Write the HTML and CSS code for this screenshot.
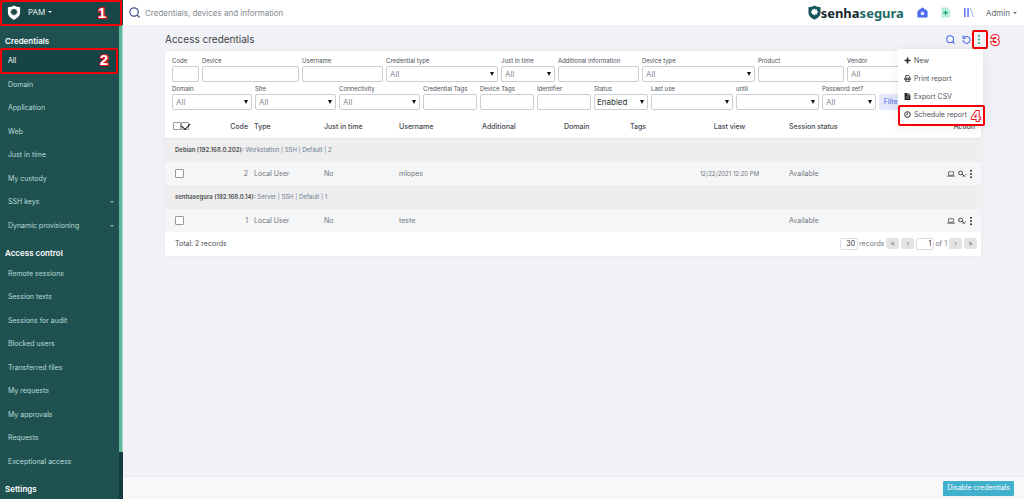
FILE: index.html
```html
<!DOCTYPE html>
<html lang="en">
<head>
<meta charset="utf-8">
<title>Access credentials</title>
<link rel="stylesheet" href="styles.css">
</head>
<body>
<svg class="sprite" aria-hidden="true">
  <symbol id="i-search" viewBox="0 0 12 12"><circle cx="5.5" cy="5.5" r="4.6" fill="none" stroke="currentColor" stroke-width="1.4"/><path d="M8.800 8.800L11.500 11.500" stroke="currentColor" stroke-width="1.4"/></symbol>
  <symbol id="i-laptop" viewBox="0 0 16 12"><path d="M3 1.500h10v7H3z" fill="none" stroke="currentColor" stroke-width="1.300"/><path d="M.5 10.300h15" stroke="currentColor" stroke-width="1.500"/></symbol>
  <symbol id="i-key" viewBox="0 0 16 14"><circle cx="5.200" cy="5" r="3.800" fill="none" stroke="currentColor" stroke-width="1.800"/><path d="M8 7.500l6.500 5M11 10l-1.500 2.500M13.500 9l2-1" stroke="currentColor" stroke-width="1.800"/></symbol>
  <symbol id="i-dots" viewBox="0 0 4 12"><circle cx="2" cy="2" r="1.200" fill="currentColor"/><circle cx="2" cy="6" r="1.200" fill="currentColor"/><circle cx="2" cy="10" r="1.200" fill="currentColor"/></symbol>
  <symbol id="i-shield" viewBox="0 0 14 16"><path d="M7 0.500C5 1.800 3 2.300 0.500 2.300V8c0 4 3.300 6.300 6.500 7.700C10.200 14.300 13.500 12 13.500 8V2.300C11 2.300 9 1.800 7 .5z" fill="currentColor"/><path class="gear" d="M7 3.600l1 1.100 1.500-.2.200 1.500L11 7.500l-1.300 1.200-.2 1.500-1.500-.2L7 11.400 6 10l-1.500.2-.2-1.500L3 7.500 4.300 6l.2-1.500 1.500.2z"/></symbol>
</svg>

<aside class="sidebar">
  <header class="brand">
    <svg class="brand-icon"><use href="#i-shield"/></svg>
    <button class="brand-menu" type="button">PAM <span class="caret"></span></button>
    <span class="mark mark-1"><b class="step">1</b></span>
  </header>
  <div class="side-body">
    <nav class="side-nav">
      <h2>Credentials</h2>
      <ul class="first-group">
        <li class="active"><a href="#">All</a><span class="mark mark-2"><b class="step">2</b></span></li>
        <li><a href="#">Domain</a></li>
        <li><a href="#">Application</a></li>
        <li><a href="#">Web</a></li>
        <li><a href="#">Just in time</a></li>
        <li><a href="#">My custody</a></li>
        <li><a href="#">SSH keys <span class="caret"></span></a></li>
        <li><a href="#">Dynamic provisioning <span class="caret"></span></a></li>
      </ul>
      <h2>Access control</h2>
      <ul class="second-group">
        <li><a href="#">Remote sessions</a></li>
        <li><a href="#">Session texts</a></li>
        <li><a href="#">Sessions for audit</a></li>
        <li><a href="#">Blocked users</a></li>
        <li><a href="#">Transferred files</a></li>
        <li><a href="#">My requests</a></li>
        <li><a href="#">My approvals</a></li>
        <li><a href="#">Requests</a></li>
        <li><a href="#">Exceptional access</a></li>
      </ul>
      <h2>Settings</h2>
    </nav>
    <div class="track"><div class="thumb"></div></div>
  </div>
</aside>

<div class="page">
  <header class="topbar">
    <label class="search"><svg><use href="#i-search"/></svg><input type="text" aria-label="Search" placeholder="Credentials, devices and information"></label>
    <a class="logo" href="#"><svg><use href="#i-shield"/></svg><span>senha<em>segura</em></span></a>
    <nav class="top-actions">
      <a href="#" aria-label="Home"><svg viewBox="0 0 12 12"><path d="M6 1L11 4.500V11H1V4.500z" fill="#4c68ee" stroke="#4c68ee" stroke-linejoin="round"/><circle cx="6" cy="7" r="2" fill="#dfe5ff"/></svg></a>
      <a href="#" aria-label="New file"><svg viewBox="0 0 12 12"><path d="M1.500 0.500H8L11 3.500V11.500H1.500z" fill="#b9efd9"/><path d="M6 3.700V8.700M3.500 6.200H8.500" stroke="#13a673" stroke-width="1.300"/></svg></a>
      <a href="#" aria-label="Library"><svg viewBox="0 0 12 12"><path d="M2 1V11M5.500 1V11" stroke="#4c68ee" stroke-width="1.500"/><path d="M8 1L11.300 11" stroke="#a9b8f7" stroke-width="1.200"/></svg></a>
    </nav>
    <button class="user" type="button">Admin <span class="caret"></span></button>
  </header>

  <main class="content">
    <div class="title-row">
      <h1>Access credentials</h1>
      <div class="tools">
        <button type="button" aria-label="Search"><svg><use href="#i-search"/></svg></button>
        <button type="button" aria-label="Refresh"><svg viewBox="0 0 12 12"><path d="M2.600 3.500A4.600 4.600 0 1 1 1.500 6.500" fill="none" stroke="currentColor" stroke-width="1.400"/><path d="M1.500 0.500V4.300H5" fill="none" stroke="currentColor" stroke-width="1.400"/></svg></button>
        <button class="more" type="button" aria-label="More"><svg><use href="#i-dots"/></svg><span class="mark mark-3"><b class="step">3</b></span></button>
        <div class="menu">
          <a href="#"><svg viewBox="0 0 12 12"><path d="M6 1V11M1 6H11" stroke="currentColor" stroke-width="2.600"/></svg>New</a>
          <a href="#"><svg viewBox="0 0 12 12"><path d="M3 5V1H8L9.500 2.500V5M3 8H1V5.500H11V8H9M3 7.500H9V11H3z" fill="none" stroke="currentColor" stroke-width="1.400"/></svg>Print report</a>
          <a href="#"><svg viewBox="0 0 12 12"><path d="M1 0H6V4H11V12H1z" fill="currentColor"/><path d="M7 0L11 3H7z" fill="currentColor"/><path d="M3 6.500H9M3 9H9" stroke="#fff" stroke-width=".6"/></svg>Export CSV</a>
          <a href="#"><svg viewBox="0 0 12 12"><circle cx="6" cy="6" r="4.800" fill="none" stroke="currentColor" stroke-width="1.700"/><path d="M6 3V6.500H3.800" fill="none" stroke="currentColor" stroke-width="1.300"/></svg>Schedule report<span class="mark mark-4"><b class="step">4</b></span></a>
        </div>
      </div>
    </div>

    <section class="card">
      <form class="filters">
        <div class="row row-a">
          <label>Code<input type="text"></label>
          <label>Device<input type="text"></label>
          <label>Username<input type="text"></label>
          <label>Credential type<span class="select"><select><option>All</option></select></span></label>
          <label>Just in time<span class="select"><select><option>All</option></select></span></label>
          <label>Additional information<input type="text"></label>
          <label>Device type<span class="select"><select><option>All</option></select></span></label>
          <label>Product<input type="text"></label>
          <label>Vendor<span class="select"><select><option>All</option></select></span></label>
        </div>
        <div class="row row-b">
          <label>Domain<span class="select"><select><option>All</option></select></span></label>
          <label>Site<span class="select"><select><option>All</option></select></span></label>
          <label>Connectivity<span class="select"><select><option>All</option></select></span></label>
          <label>Credential Tags<input type="text"></label>
          <label>Device Tags<input type="text"></label>
          <label>Identifier<input type="text"></label>
          <label>Status<span class="select chosen"><select><option>Enabled</option></select></span></label>
          <label>Last use<span class="select"><select><option></option></select></span></label>
          <label>until<span class="select"><select><option></option></select></span></label>
          <label>Password set?<span class="select"><select><option>All</option></select></span></label>
          <button class="filter" type="button">Filter</button>
        </div>
      </form>

      <table>
        <colgroup><col class="c-check"><col class="c-code"><col class="c-type"><col class="c-jit"><col class="c-user"><col class="c-add"><col class="c-domain"><col class="c-tags"><col class="c-view"><col class="c-session"><col class="c-action"></colgroup>
        <thead>
          <tr>
            <th><div class="checks"><input type="checkbox" aria-label="Clear selection"><input type="checkbox" checked aria-label="Select all"></div></th>
            <th class="num">Code</th><th>Type</th><th>Just in time</th><th>Username</th><th>Additional</th><th>Domain</th><th>Tags</th><th class="mid">Last view</th><th>Session status</th><th class="end">Action</th>
          </tr>
        </thead>
        <tbody>
          <tr class="group"><td colspan="11"><b>Debian (192.168.0.202):</b> Workstation | SSH | Default | 2</td></tr>
          <tr>
            <td><input type="checkbox" aria-label="Select credential 2"></td><td class="num">2</td><td>Local User</td><td>No</td><td>mlopes</td><td></td><td></td><td></td><td class="mid date">12/22/2021 12:20 PM</td><td>Available</td>
            <td><div class="acts"><button type="button" aria-label="Open session"><svg><use href="#i-laptop"/></svg></button><button type="button" aria-label="Password"><svg><use href="#i-key"/></svg></button><button type="button" aria-label="More"><svg class="thin"><use href="#i-dots"/></svg></button></div></td>
          </tr>
          <tr class="group"><td colspan="11"><b>senhasegura (192.168.0.14):</b> Server | SSH | Default | 1</td></tr>
          <tr>
            <td><input type="checkbox" aria-label="Select credential 1"></td><td class="num">1</td><td>Local User</td><td>No</td><td>teste</td><td></td><td></td><td></td><td></td><td>Available</td>
            <td><div class="acts"><button type="button" aria-label="Open session"><svg><use href="#i-laptop"/></svg></button><button type="button" aria-label="Password"><svg><use href="#i-key"/></svg></button><button type="button" aria-label="More"><svg class="thin"><use href="#i-dots"/></svg></button></div></td>
          </tr>
        </tbody>
      </table>

      <footer class="pager">
        <span class="total">Total: 2 records</span>
        <label><input type="text" value="30">records</label>
        <button type="button">«</button>
        <button type="button">‹</button>
        <label><input type="text" value="1">of 1</label>
        <button type="button">›</button>
        <button type="button">»</button>
      </footer>
    </section>
  </main>

  <footer class="bottom"><button type="button">Disable credentials</button></footer>
</div>
</body>
</html>
```
FILE: styles.css
```css
* { box-sizing: border-box; }
body { margin: 0; min-height: 100vh; display: flex; overflow: hidden; font: 7px/12px Inter, "Open Sans", sans-serif; color: #4b4f56; background: #f1f2f7; }
button, input, select { font: inherit; color: inherit; margin: 0; padding: 0; border: 0; background: none; }
button { display: flex; align-items: center; justify-content: center; }
a { color: inherit; text-decoration: none; }
h1, h2, ul { margin: 0; padding: 0; list-style: none; }
svg { display: block; flex: none; }
.sprite { position: absolute; width: 0; height: 0; }
.caret { border: 2px solid transparent; border-top-color: currentColor; border-bottom: 0; }

.sidebar { width: 123px; flex: none; display: flex; flex-direction: column; background: #1f5150; color: #b9dcd7; }
.brand { position: relative; height: 25px; display: flex; align-items: center; gap: 7px; padding: 0 0 1px 7px; background: #184646; color: #fff; }
.brand-icon { width: 14px; height: 15px; }
.brand-icon, .logo svg { fill: #1b4a4a; }
.brand-menu { gap: 3px; font-size: 8px; color: #e4efee; }
.side-body { flex: 1; display: flex; }
.side-nav { flex: 1; display: flex; flex-direction: column; padding-bottom: 2px; }
.side-nav h2 { padding: 8px 0 0 5px; font-size: 8px; line-height: 16px; font-weight: 600; color: #fff; }
.side-nav ul { display: flex; flex-direction: column; }
.first-group { flex: 8; }
.second-group { flex: 9; }
.side-nav li { position: relative; flex: 1; display: flex; }
.side-nav a { flex: 1; display: flex; align-items: center; justify-content: space-between; padding: 1px 5px 0 8px; }
.side-nav a .caret { opacity: .7; }
.side-nav .active { background: #174545; color: #fff; }
.track { width: 4px; background: #123c40; }
.thumb { height: 90%; background: #5fb89a; border-right: 1px solid #a5dcc8; }

.mark { position: absolute; z-index: 3; border: 2px solid #f50008; border-radius: 2px; pointer-events: none; }
.step { position: absolute; font: bold 15px/15px "Liberation Sans", sans-serif; color: #fff; -webkit-text-stroke: 2px #e8101c; paint-order: stroke fill; }
.mark-1 { inset: 0 1px -1px 0; }
.mark-1 .step { right: 14px; top: 3px; }
.mark-2 { inset: -1px 1px -1px 0; }
.mark-2 .step { right: 8px; top: 2px; }

.page { flex: 1; min-width: 0; display: flex; flex-direction: column; }
.topbar { height: 25px; display: flex; align-items: center; padding: 0 7px 0 6px; background: #fff; }
.search { flex: 1; display: flex; align-items: center; gap: 5px; color: #4d5b8c; }
.search svg { width: 11px; height: 11px; }
.search input { flex: 1; font-size: 8px; outline: 0; }
.search input::placeholder { color: #85888e; opacity: 1; }
.logo { display: flex; align-items: center; gap: 0; font: bold 13px/16px "Noto Sans", sans-serif; color: #13272d; }
.logo svg { width: 13px; height: 15px; color: #14565a; fill: #fff; }
.logo em { font-style: normal; color: #1c6a68; }
.top-actions { display: flex; gap: 12px; margin: 0 12px 0 13px; }
.top-actions svg { width: 11px; height: 11px; }
.user { gap: 3px; font-size: 8px; color: #666a72; }

.content { flex: 1; padding: 5px 43px 0 42px; }
.title-row { display: flex; align-items: center; justify-content: space-between; height: 21px; padding-bottom: 3px; }
h1 { font-size: 10px; line-height: 16px; font-weight: 400; color: #3f4247; }
.tools { position: relative; display: flex; gap: 6px; color: #4c68ee; }
.tools svg { width: 9px; height: 9px; }
.tools button { width: 10px; }
.tools .more { position: relative; width: 4px; color: #1fbf86; }
.tools .more svg { width: 4px; height: 11px; }
.mark-3 { width: 16px; height: 19px; left: -5px; top: -4px; }
.mark-3 .step { left: 17px; top: 0; }
.menu { position: absolute; z-index: 2; right: -2px; top: 15px; width: 85px; padding: 3px 0 2px; background: #fff; box-shadow: 0 2px 12px #00000012; color: #505359; }
.menu a { position: relative; display: flex; align-items: center; gap: 3px; height: 18px; padding-left: 6px; }
.menu svg { width: 7px; height: 7px; color: #222; }
.mark-4 { inset: -1px -2px -2px 0; }
.mark-4 .step { right: 3px; top: 1px; }

.card { background: #fff; box-shadow: 0 0 6px #0000000a; }
.filters { display: grid; gap: 1px; padding: 4px 6px 2px 7px; }
.row { display: grid; column-gap: 3px; align-items: end; }
.row-a { grid-template-columns: 27fr 97fr 81fr 112fr 54fr 81fr 113fr 86fr 81fr 44fr; }
.row-b { grid-template-columns: 80fr 81fr 81fr 54fr 54fr 54fr 54fr 82fr 83fr 54fr 26fr 67fr; }
.row label { display: block; min-width: 0; font-size: 6px; line-height: 11px; white-space: nowrap; }
.row input, .row select { display: block; width: 100%; height: 16px; border: 1px solid #ccced1; border-radius: 2px; background: #fff; font-size: 8px; }
.select { display: block; position: relative; }
.select select { appearance: none; padding-left: 3px; color: #8b8e93; }
.select.chosen select { padding-left: 2px; color: #333; }
.select::after { content: ""; position: absolute; right: 4px; top: 6px; border: 2px solid transparent; border-top: 4px solid #111; border-bottom: 0; pointer-events: none; }
.filter { height: 16px; border-radius: 2px; background: #e3e8fb; color: #4c68ee; }

table { width: 100%; table-layout: fixed; border-collapse: collapse; }
.c-check { width: 36px; } .c-code { width: 50px; } .c-type { width: 70px; } .c-jit { width: 75px; }
.c-user { width: 83px; } .c-add { width: 82px; } .c-domain { width: 66px; } .c-tags { width: 46px; }
.c-view { width: 113px; } .c-session { width: 115px; } .c-action { width: 80px; }
th, td { height: 23px; padding: 0 3px; text-align: left; font-weight: 400; white-space: nowrap; }
th { height: 26px; padding-top: 5px; font-weight: 500; color: #45484e; border-bottom: 1px solid #e4e5e7; }
td { color: #74777c; background: #f5f6f8; }
td:first-child { padding-left: 10px; }
.group td { height: 24px; background: #eee; font-size: 6px; color: #6b7a90; }
.group b { font-weight: 600; color: #4b4e54; }
.num, .end { text-align: right; }
.end { padding-right: 6px; }
.mid { text-align: center; }
.date { font-size: 6px; }
input[type="checkbox"] { appearance: none; display: block; width: 9px; height: 9px; border: 1px solid #999; border-radius: 1px; background: #fff; }
.checks { display: flex; padding: 0 0 2px 5px; }
.checks input[type="checkbox"] { width: 8px; height: 8px; }
.checks input:checked::after { content: ""; display: block; width: 7px; height: 4px; border: solid #111; border-width: 0 0 1px 1px; transform: rotate(-45deg); }
.acts { display: flex; justify-content: flex-end; gap: 3px; padding-right: 5px; color: #333; }
.acts svg { width: 8px; height: 8px; }
.acts .thin { width: 4px; height: 10px; }

.pager { display: flex; align-items: center; gap: 2px; height: 24px; padding: 0 4px 1px 10px; color: #74777c; }
.pager label { display: flex; align-items: center; gap: 1px; }
.total { flex: 1; color: #4b4e54; }
.pager input { width: 18px; height: 12px; padding-right: 2px; border: 1px solid #ddd; border-radius: 2px; text-align: right; color: #333; }
.pager button { width: 13px; height: 11px; border-radius: 2px; background: #e4e4e4; color: #777; }

.bottom { height: 23px; display: flex; align-items: center; justify-content: flex-end; padding-right: 10px; background: #f8f8f8; border-top: 1px solid #e8e9ec; }
.bottom button { height: 15px; padding: 0 4px; border-radius: 1px; background: #41b0cd; color: #fff; }
```
